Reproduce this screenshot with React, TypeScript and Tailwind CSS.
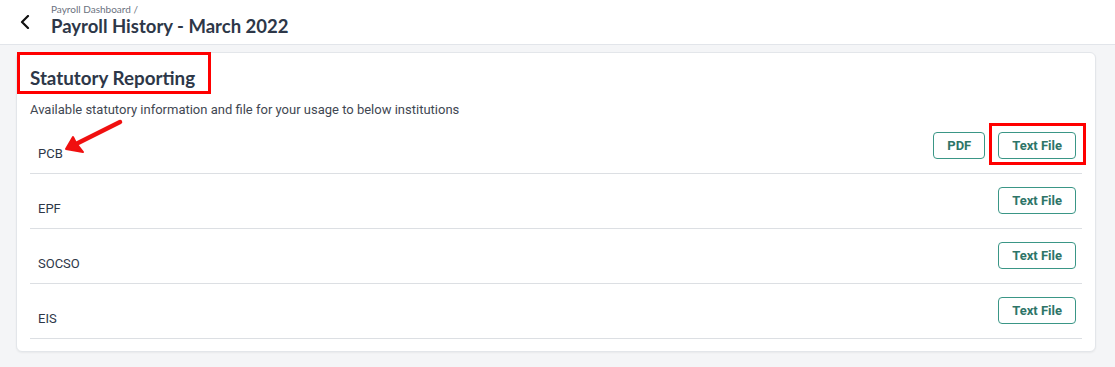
const rows = [
  { label: "PCB", pdf: true },
  { label: "EPF", pdf: false },
  { label: "SOCSO", pdf: false },
  { label: "EIS", pdf: false },
];

function FileButton({ children }: { children: string }) {
  return (
    <button className="h-[27px] px-[13px] rounded-[4px] border border-[#3a9686] bg-white text-[13px] font-bold text-[#2e7568] font-['Roboto',sans-serif]">
      {children}
    </button>
  );
}

export default function App() {
  return (
    <div className="relative min-h-[367px] bg-[#f4f5f7] font-['Roboto',sans-serif]">
      <header className="h-[45px] bg-white border-b border-[#e2e5ea] flex items-center">
        <div className="w-[51px] flex justify-center pl-[1px]">
          <svg width="12" height="14" viewBox="0 0 12 14" className="-ml-[3px]">
            <path d="M9 1 L3 7 L9 13" fill="none" stroke="#111" strokeWidth="2.2" strokeLinecap="round" strokeLinejoin="round" />
          </svg>
        </div>
        <div className="flex flex-col -mt-[3px]">
          <span className="text-[10px] leading-[11px] text-[#6b7280] font-['Lato',sans-serif]">Payroll Dashboard /</span>
          <h1 className="text-[18.5px] leading-[22px] font-bold text-[#2d3748] font-['Lato',sans-serif]">
            Payroll History - March 2022
          </h1>
        </div>
      </header>

      <div className="pl-4 pr-[19px] pt-[7px]">
        <div className="bg-white rounded-[6px] border border-[#e3e6ea] shadow-[0_1px_2px_rgba(0,0,0,0.05)] px-[13px] pb-[12px]">
          <h2 className="pt-[13px] text-[18.8px] leading-[24px] font-bold text-[#2d3748] font-['Lato',sans-serif]">
            Statutory Reporting
          </h2>
          <p className="mt-[12px] text-[13px] leading-[16px] text-[#3f4752]">
            Available statutory information and file for your usage to below institutions
          </p>
          <div className="mt-[1px]">
            {rows.map((r) => (
              <div key={r.label} className="h-[55px] border-b border-[#dcdfe3] flex justify-between pl-2 pr-[6px]">
                <span className="pt-[27px] text-[13px] leading-[15px] text-[#2d3748]">{r.label}</span>
                <div className="flex gap-[13px] pt-[13px]">
                  {r.pdf && <FileButton>PDF</FileButton>}
                  <FileButton>Text File</FileButton>
                </div>
              </div>
            ))}
          </div>
        </div>
      </div>

      <div className="absolute left-[17px] top-[52px] w-[194px] h-[42px] border-[3px] border-[#ff0000]" />
      <div className="absolute left-[989px] top-[123px] w-[97px] h-[42px] border-[3px] border-[#ff0000]" />
      <svg className="absolute left-0 top-0 pointer-events-none" width="1115" height="367">
        <line x1="120" y1="122" x2="72" y2="146" stroke="#f01010" strokeWidth="4.5" strokeLinecap="round" />
        <polygon points="66,149 73,137 76,143 83,152" fill="#f01010" stroke="#f01010" strokeWidth="2" strokeLinejoin="round" />
      </svg>
    </div>
  );
}
